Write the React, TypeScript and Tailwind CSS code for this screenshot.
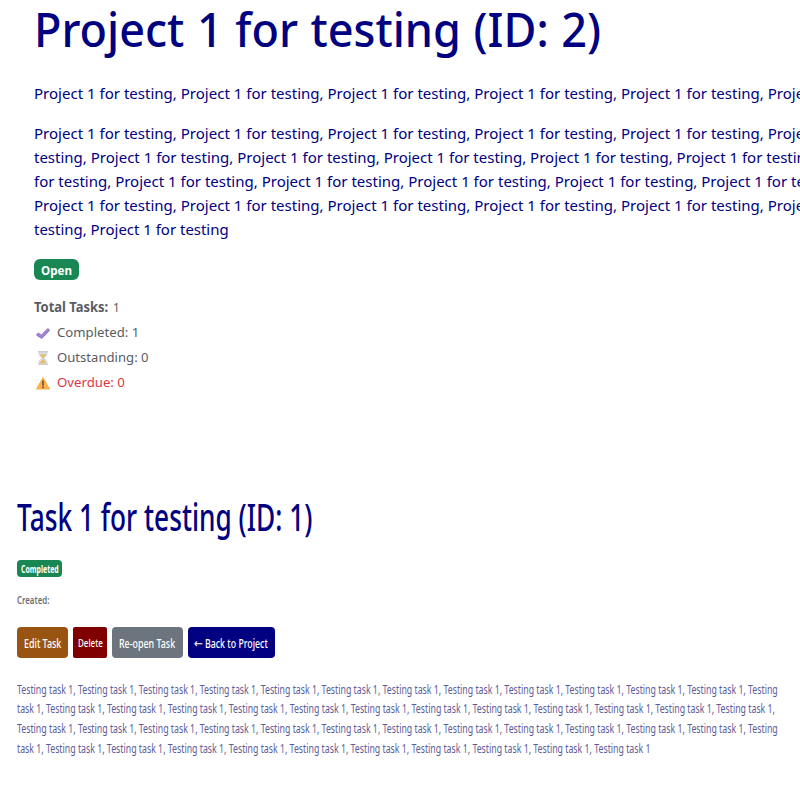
import { useLayoutEffect, useRef, useState } from "react";
import type { ReactNode } from "react";

/** A single line of text condensed or widened to an exact width. */
function Fit({ w, className = "", children }: { w: number; className?: string; children: ReactNode }) {
  const ref = useRef<HTMLSpanElement>(null);
  const [scale, setScale] = useState(1);
  useLayoutEffect(() => {
    if (ref.current) setScale(w / ref.current.offsetWidth);
  }, [w]);
  return (
    <span className="block shrink-0" style={{ width: w }}>
      <span
        ref={ref}
        className={"inline-block origin-left whitespace-nowrap align-top " + className}
        style={{ transform: `scaleX(${scale})` }}
      >
        {children}
      </span>
    </span>
  );
}

const P = "Project 1 for testing";
const T = "Testing task 1";
const list = (text: string, n: number) => Array(n).fill(text).join(", ");

function CheckIcon() {
  return (
    <svg viewBox="0 0 16 16" className="h-4 w-4">
      <path d="M1.500 9.700 3.400 8l3 2L12.800 3.400 14.600 5 7 13.300Z" fill="#a283d3" stroke="#a283d3" strokeWidth="1" strokeLinejoin="round" />
      <path d="m1.600 10.300 5 3L14.500 5.500" fill="none" stroke="#8568ba" strokeWidth=".8" />
    </svg>
  );
}

function HourglassIcon() {
  return (
    <svg viewBox="0 0 16 16" className="h-4 w-4">
      <path d="M3.800 2.200h8.400c0 3-1.200 4.400-3.300 5.800 2.100 1.400 3.300 2.800 3.300 5.800H3.800c0-3 1.200-4.400 3.300-5.800-2.100-1.400-3.300-2.800-3.300-5.800Z" fill="#d3e2ee" stroke="#c3d2de" strokeWidth=".6" />
      <path d="M5 4.300h6C10.500 6 9.300 6.900 8 7.800 6.700 6.900 5.500 6 5 4.300ZM8 9.500c1.800 1.200 2.800 2.200 3.200 3.700H4.800C5.200 11.700 6.200 10.700 8 9.500Z" fill="#efb964" />
      <path d="M8 7v4" stroke="#efb554" strokeWidth=".8" />
      <path d="M2.900 1.800h10.200M2.900 14.200h10.200" stroke="#c9bdb6" strokeWidth="1.100" />
    </svg>
  );
}

function WarningIcon() {
  return (
    <svg viewBox="0 0 16 16" className="h-4 w-4">
      <path d="M8 2.800 14.400 14H1.600Z" fill="#fbb04c" stroke="#fbb04c" strokeWidth="1.200" strokeLinejoin="round" />
      <path d="M8 6v4.200" stroke="#5c4a3a" strokeWidth="1.500" strokeLinecap="round" />
      <circle cx="8" cy="12.400" r=".9" fill="#5c4a3a" />
    </svg>
  );
}

function Stat({ icon, w, children, className }: { icon: ReactNode; w: number; children: ReactNode; className: string }) {
  return (
    <li className={"flex h-[25px] items-center " + className}>
      <span className="mr-[5.500px] ml-[1px]">{icon}</span>
      <Fit w={w}>{children}</Fit>
    </li>
  );
}

function ProjectPanel() {
  return (
    <section className="h-[490px] pl-[34px] text-[#000080]">
      <h1 className="h-[60px] text-[48px] leading-[58px] font-medium">
        <Fit w={567} className="[word-spacing:1px]">Project 1 for testing (ID: 2)</Fit>
      </h1>
      <p className="mt-[21px] text-[15.300px] leading-6">
        <Fit w={872.5}>{list(P, 6)}</Fit>
      </p>
      <div className="mt-4 text-[15.300px] leading-6">
        <Fit w={872.5}>{list(P, 6)}</Fit>
        <Fit w={781.5}>{"testing, " + list(P, 5)}</Fit>
        <Fit w={805.5}>{"for testing, " + list(P, 5)}</Fit>
        <Fit w={872.5}>{list(P, 6)}</Fit>
        <Fit w={194.5}>{"testing, " + P}</Fit>
      </div>
      <div className="mt-[18px] flex h-[21px] w-[45px] justify-center rounded-md bg-[#198754] text-[12px] leading-[23px] font-bold text-white">
        <Fit w={31}>Open</Fit>
      </div>
      <ul className="mt-[15px] text-[13.400px] leading-[25px] text-[#595c5f]">
        <li className="flex h-[25px] gap-[4px]">
          <Fit w={74.5} className="font-bold">Total Tasks:</Fit>
          <Fit w={7}>1</Fit>
        </li>
        <Stat icon={<CheckIcon />} w={82.5} className="">Completed: 1</Stat>
        <Stat icon={<HourglassIcon />} w={92} className="">Outstanding: 0</Stat>
        <Stat icon={<WarningIcon />} w={68} className="text-[#dc3545]">Overdue: 0</Stat>
      </ul>
    </section>
  );
}

function TaskPanel() {
  return (
    <section className="pl-[17px]">
      <h2 className="h-[70px] pt-[2px] text-[38px] leading-[48px] font-medium text-[#000080]">
        <Fit w={295.5}>Task 1 for testing (ID: 1)</Fit>
      </h2>
      <div className="flex h-[17px] w-[45px] justify-center rounded-[4px] bg-[#198754] text-[10px] leading-[19px] font-bold text-white">
        <Fit w={37.5}>Completed</Fit>
      </div>
      <p className="mt-[14px] text-[10.800px] leading-[18px] font-semibold text-[#6c6f72]">
        <Fit w={32}>Created:</Fit>
      </p>
      <div className="mt-[18px] flex h-[31px] gap-[5px] text-[13px] leading-[33px] font-medium text-white">
        <button className="flex w-[51px] justify-center rounded-[4px] bg-[#9a5412]"><Fit w={37}>Edit Task</Fit></button>
        <button className="flex w-[34px] justify-center rounded-[2px] bg-[#800000] text-[11.500px] leading-[31px]"><Fit w={25}>Delete</Fit></button>
        <button className="flex w-[70.500px] justify-center rounded-[4px] bg-[#6c757d]"><Fit w={56}>Re-open Task</Fit></button>
        <button className="flex w-[87.500px] justify-center gap-[2px] rounded-[4px] bg-[#000080]">
          <Fit w={9} className="font-['DejaVu_Sans']">←</Fit>
          <Fit w={63}>Back to Project</Fit>
        </button>
      </div>
      <div className="mt-[21.500px] text-[12.800px] leading-[19.800px] text-[#5c5c98]">
        <Fit w={760.5}>{list(T, 12) + ", Testing"}</Fit>
        <Fit w={758}>{"task 1, " + list(T, 12) + ","}</Fit>
        <Fit w={760.5}>{list(T, 12) + ", Testing"}</Fit>
        <Fit w={633.5}>{"task 1, " + list(T, 10)}</Fit>
      </div>
    </section>
  );
}

export default function App() {
  return (
    <main className="h-[800px] w-[800px] overflow-hidden bg-white font-['Noto_Sans','Open_Sans',sans-serif]">
      <ProjectPanel />
      <TaskPanel />
    </main>
  );
}
